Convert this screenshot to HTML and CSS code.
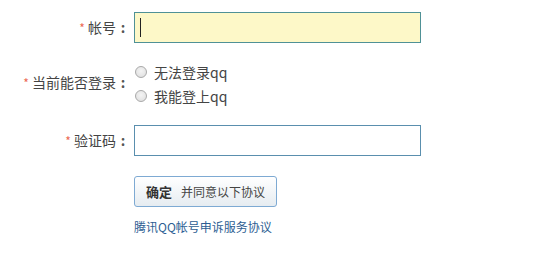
FILE: index.html
```html
<!DOCTYPE html>
<html lang="zh-CN">
<head>
<meta charset="utf-8">
<title>帐号申诉</title>
<link rel="stylesheet" href="styles.css">
</head>
<body>
<form class="form">
  <div class="row row-account">
    <label class="label"><span class="req">*</span> 帐号<span class="colon">:</span></label>
    <span class="field-wrap">
      <input class="text-input focused" type="text">
      <span class="caret"></span>
    </span>
  </div>
  <div class="row row-login">
    <label class="label"><span class="req">*</span> 当前能否登录<span class="colon">:</span></label>
    <div class="radios">
      <label class="radio"><input type="radio" name="login"><span>无法登录qq</span></label>
      <label class="radio"><input type="radio" name="login"><span>我能登上qq</span></label>
    </div>
  </div>
  <div class="row row-code">
    <label class="label"><span class="req">*</span> 验证码<span class="colon">:</span></label>
    <input class="text-input" type="text">
  </div>
  <div class="actions">
    <button type="button" class="btn"><b>确定</b><span class="btn-sub">并同意以下协议</span></button>
    <a class="link" href="#">腾讯QQ帐号申诉服务协议</a>
  </div>
</form>
</body>
</html>
```
FILE: styles.css
```css
html, body {
  margin: 0;
  padding: 0;
  background: #fff;
}
body {
  font-family: "Noto Sans CJK SC", "Noto Sans", sans-serif;
  color: #444;
  font-size: 14px;
}
.form {
  padding-top: 12px;
}
.row {
  display: flex;
  align-items: center;
}
.label {
  width: 130px;
  text-align: right;
  padding-right: 4px;
  font-size: 14px;
  line-height: 18px;
  color: #444;
  white-space: nowrap;
}
.colon {
  display: inline-block;
  width: 14px;
  text-align: center;
  font-weight: 700;
  color: #555;
}
.req {
  color: #ec6a52;
  font-size: 12px;
}
.field-wrap {
  position: relative;
  display: block;
}
.text-input {
  display: block;
  box-sizing: border-box;
  width: 287px;
  height: 31px;
  margin: 0;
  border: 1px solid #5c98a3;
  padding: 0 6px;
  background: #fff;
  outline: none;
  font-family: inherit;
  font-size: 14px;
}
.text-input.focused {
  background: #fdf8c8;
  border-color: #4f9196;
}
.caret {
  position: absolute;
  left: 6px;
  top: 6px;
  width: 1px;
  height: 19px;
  background: #222;
}
.row-login {
  margin-top: 17px;
}
.row-login .label {
  align-self: center;
  margin-top: -4px;
}
.radios {
  display: flex;
  flex-direction: column;
}
.radio {
  display: flex;
  align-items: center;
  height: 24px;
  font-size: 14px;
  color: #444;
}
.radio input {
  appearance: none;
  -webkit-appearance: none;
  box-sizing: border-box;
  width: 12px;
  height: 12px;
  margin: 0 7px 0 1px;
  border: 1px solid #a9a9a9;
  border-radius: 50%;
  background: radial-gradient(circle at 50% 40%, #f4f4f4 0%, #dcdcdc 100%);
}
.row-code {
  margin-top: 17px;
}
.row-code .text-input {
  height: 31px;
  border-color: #5a8fae;
}
.actions {
  padding-left: 134px;
  margin-top: 20px;
  display: flex;
  flex-direction: column;
  align-items: flex-start;
}
.btn {
  box-sizing: border-box;
  width: 143px;
  height: 31px;
  margin: 0;
  padding: 0 0 0 11px;
  border: 1px solid #7eaad3;
  border-radius: 3px;
  background: linear-gradient(#ffffff, #e6ecf1);
  font-family: inherit;
  color: #333;
  display: flex;
  align-items: center;
  cursor: pointer;
}
.btn b {
  font-size: 13px;
  font-weight: 700;
  color: #333;
}
.btn-sub {
  font-size: 12px;
  margin-left: 9px;
  color: #444;
}
.link {
  margin-top: 12px;
  font-size: 12px;
  line-height: 16px;
  color: #2d5e93;
  text-decoration: none;
}
```
